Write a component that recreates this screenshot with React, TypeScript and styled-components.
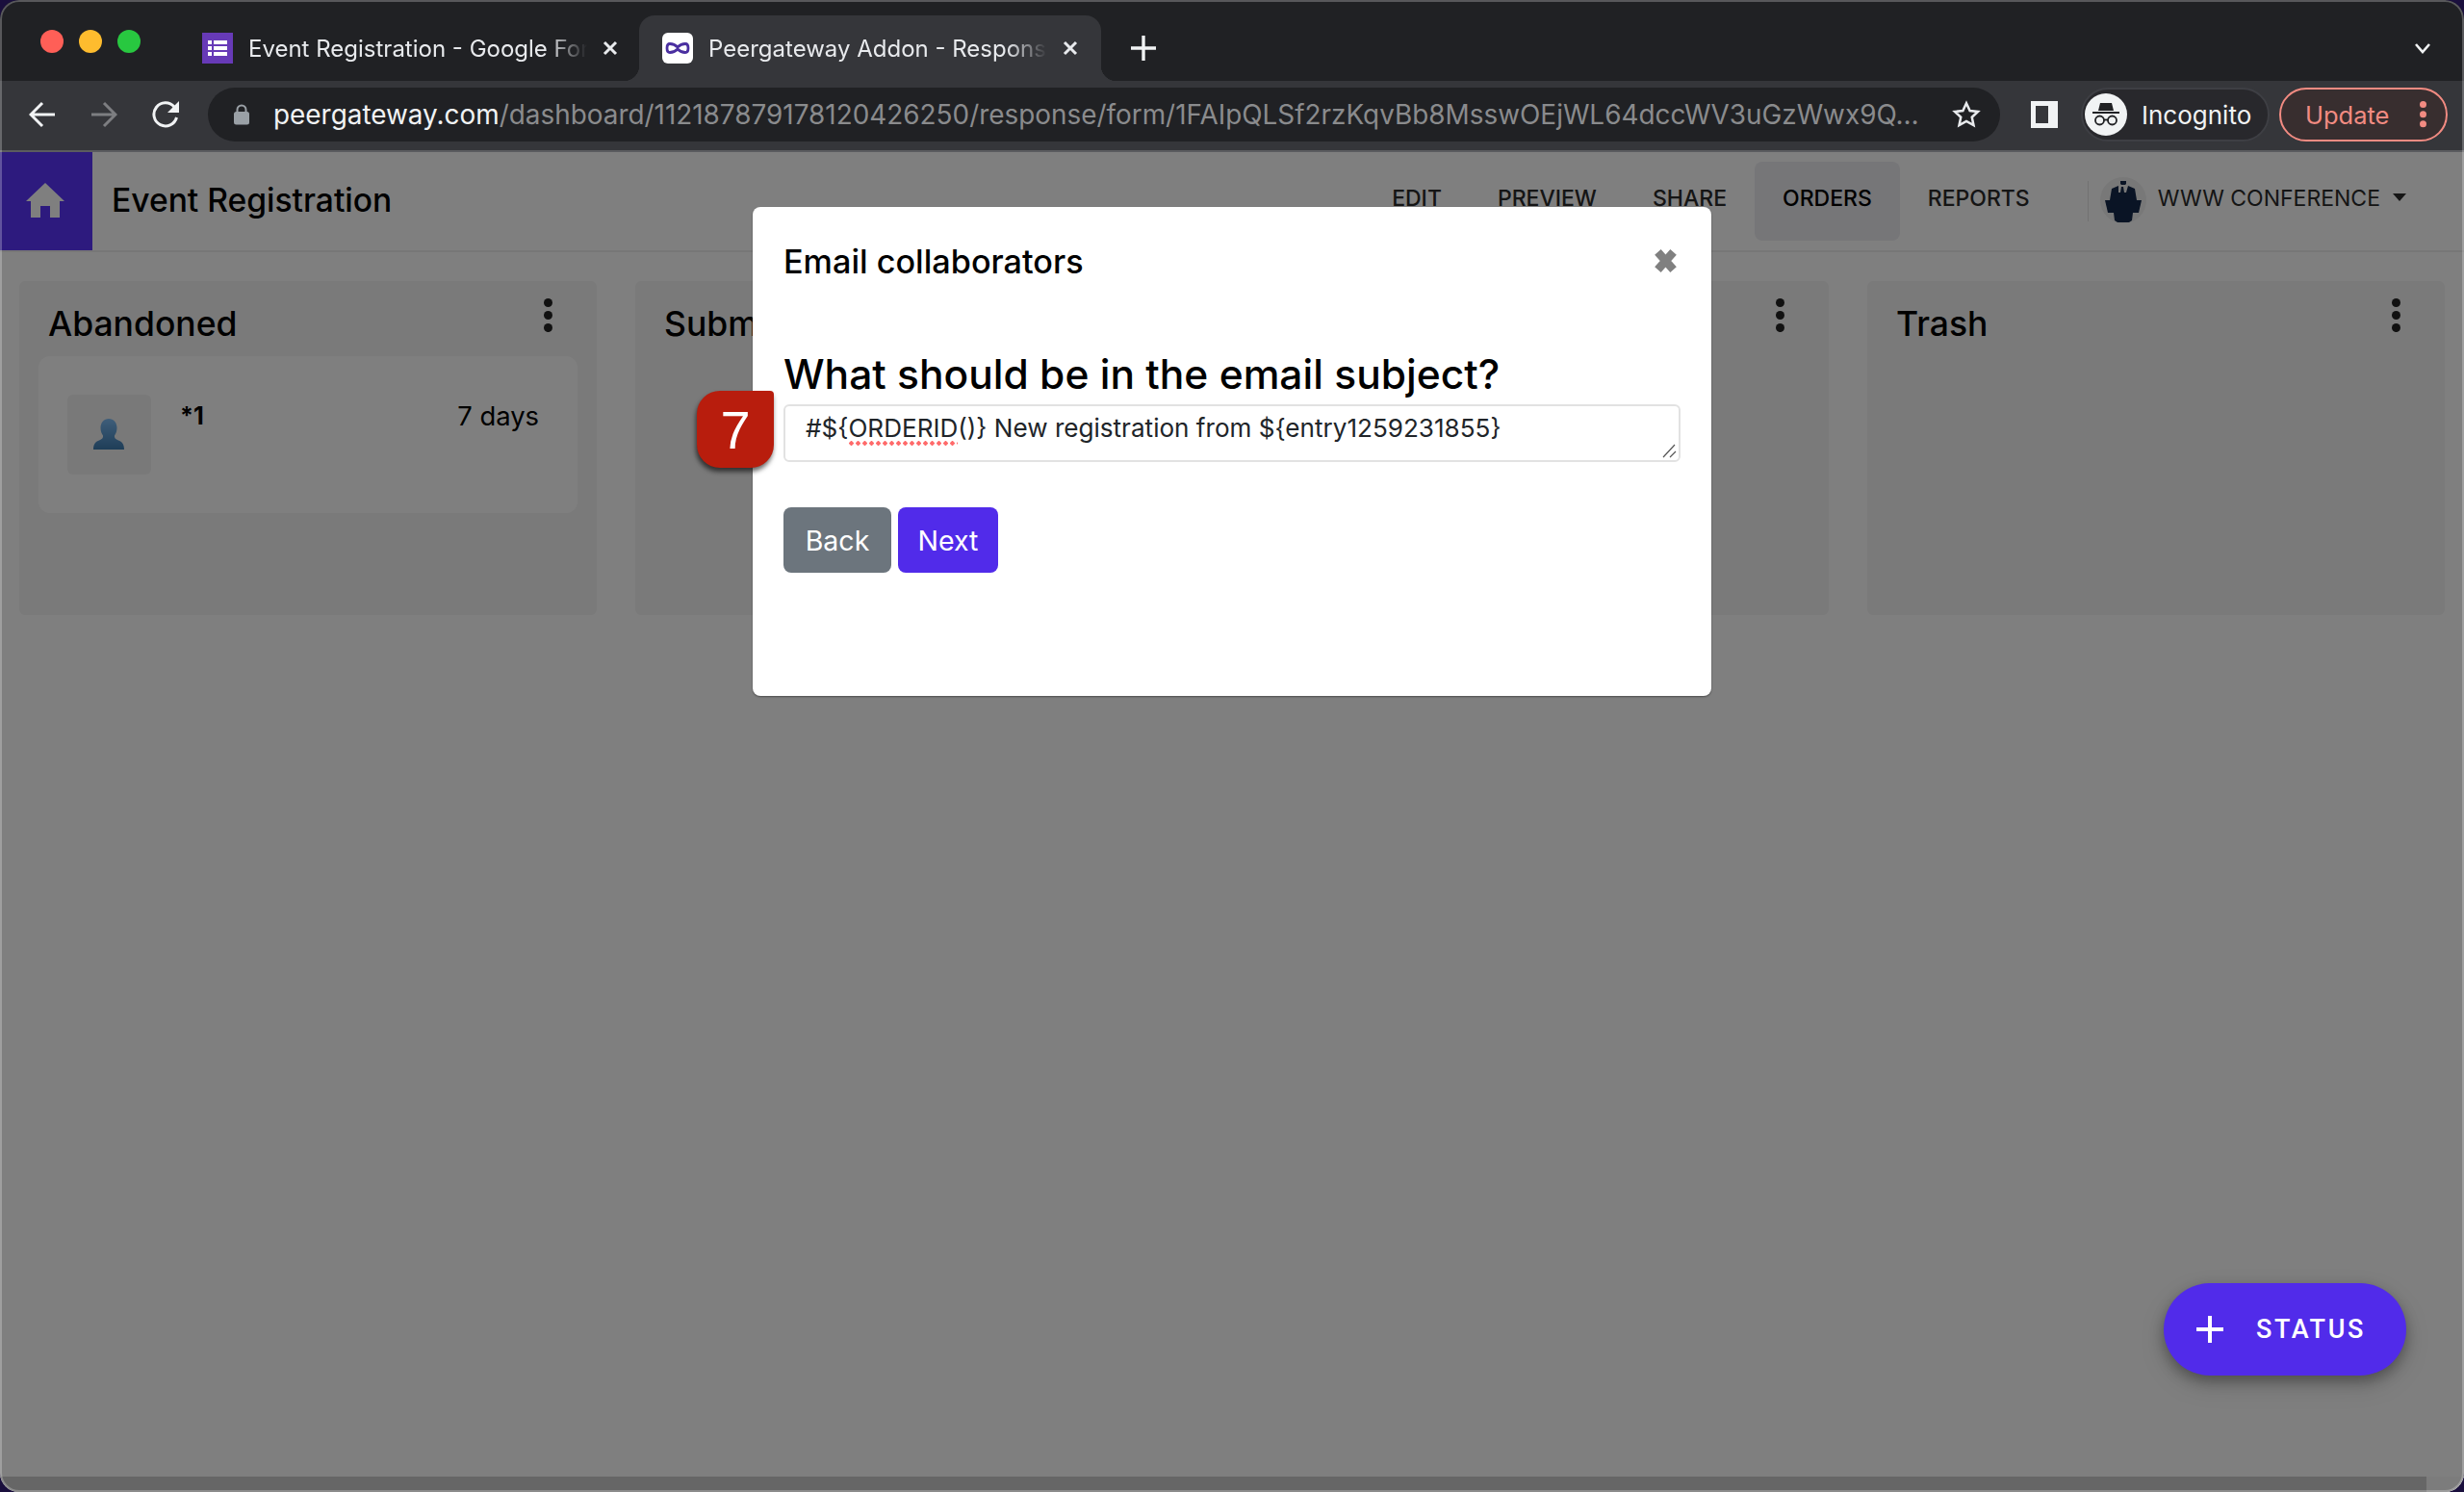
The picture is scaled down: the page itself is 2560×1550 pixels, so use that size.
import React from 'react'
import styled, { createGlobalStyle } from 'styled-components'

const GlobalStyle = createGlobalStyle`
  html, body {
    margin: 0;
    padding: 0;
    background: #1a0f3d;
    overflow: hidden;
  }
  * {
    box-sizing: border-box;
  }
`

const Window = styled.div`
  position: relative;
  width: 2560px;
  height: 1550px;
  display: flex;
  flex-direction: column;
  border-radius: 20px;
  overflow: hidden;
  font-family: Inter, "Liberation Sans", sans-serif;

  &::after {
    content: '';
    position: absolute;
    inset: 0;
    border-radius: 20px;
    border: 2px solid rgba(255, 255, 255, 0.25);
    pointer-events: none;
  }
`

const TabStrip = styled.div`
  height: 84px;
  flex: none;
  display: flex;
  align-items: stretch;
  padding-top: 16px;
  background: #202124;
`

const Lights = styled.div`
  display: flex;
  gap: 16px;
  align-self: flex-start;
  margin: 15px 40px 0 42px;
`

const Light = styled.span<{ $color: string }>`
  width: 24px;
  height: 24px;
  border-radius: 50%;
  background: ${(p) => p.$color};
`

const Tab = styled.div<{ $active?: boolean }>`
  position: relative;
  width: ${(p) => (p.$active ? '480px' : '478px')};
  display: flex;
  align-items: center;
  gap: 16px;
  padding: 0 ${(p) => (p.$active ? '24px' : '22px')} 0 24px;
  border-radius: 16px 16px 0 0;
  background: ${(p) => (p.$active ? '#35363a' : 'transparent')};

  ${(p) =>
    p.$active &&
    `
    &::before, &::after {
      content: '';
      position: absolute;
      bottom: 0;
      width: 16px;
      height: 16px;
    }
    &::before {
      left: -16px;
      background: radial-gradient(circle at 0 0, transparent 16px, #35363a 16.5px);
    }
    &::after {
      right: -16px;
      background: radial-gradient(circle at 100% 0, transparent 16px, #35363a 16.5px);
    }
  `}
`

const TabTitle = styled.span`
  flex: 1;
  min-width: 0;
  overflow: hidden;
  white-space: nowrap;
  font-size: 24px;
  color: #e8eaed;
  -webkit-mask-image: linear-gradient(to right, #000 88%, transparent 100%);
  mask-image: linear-gradient(to right, #000 88%, transparent 100%);
`

const NewTab = styled.div`
  width: 28px;
  display: flex;
  align-items: center;
  margin-left: 30px;
`

const TabListToggle = styled.div`
  margin-left: auto;
  padding-right: 34px;
  display: flex;
  align-items: center;
`

const Toolbar = styled.div`
  height: 74px;
  flex: none;
  display: flex;
  align-items: center;
  padding: 0 17px 2px 12px;
  background: #35363a;
  border-bottom: 2px solid #5b5c5f;
`

const NavButton = styled.div`
  width: 64px;
  display: flex;
  justify-content: center;
`

const Omnibox = styled.div`
  flex: 1;
  height: 56px;
  margin-left: 12px;
  display: flex;
  align-items: center;
  padding: 0 20px 0 26px;
  border-radius: 28px;
  background: #202124;
`

const UrlText = styled.div`
  flex: 1;
  margin-left: 24px;
  white-space: nowrap;
  overflow: hidden;
  font-size: 27.9px;
  color: #8a8b8d;

  b {
    font-weight: 400;
    color: #f1f3f4;
  }
`

const SidePanel = styled.div`
  width: 28px;
  height: 28px;
  margin-left: 32px;
  border: 5px solid #f1f3f4;
  border-right-width: 10px;
  background: #35363a;
`

const IncognitoPill = styled.div`
  width: 196px;
  height: 56px;
  margin-left: 24px;
  display: flex;
  align-items: center;
  gap: 15px;
  padding-left: 2px;
  border: 2px solid #3e3f44;
  border-radius: 28px;
  background: #28282c;
  font-size: 26px;
  color: #f1f3f4;
`

const IncognitoAvatar = styled.div`
  width: 44px;
  height: 44px;
  flex: none;
  display: flex;
  align-items: center;
  justify-content: center;
  border-radius: 50%;
  background: #f1f3f4;
`

const UpdatePill = styled.div`
  width: 175px;
  height: 56px;
  margin-left: 10px;
  display: flex;
  align-items: center;
  justify-content: space-between;
  padding: 0 20px 0 25px;
  border: 2px solid #f28b82;
  border-radius: 28px;
  background: #382e2f;
  font-size: 25.5px;
  color: #f28b82;
`

const Page = styled.div`
  position: relative;
  flex: 1;
  min-height: 0;
  display: flex;
  flex-direction: column;
  background: #fff;
`

const NavBar = styled.div`
  height: 104px;
  flex: none;
  display: flex;
  align-items: stretch;
  border-bottom: 2px solid #eee;
`

const HomeBlock = styled.div`
  width: 96px;
  display: flex;
  align-items: center;
  justify-content: center;
  padding: 0 3px 2px 0;
  background: #5a34fc;
`

const FormTitle = styled.div`
  align-self: center;
  margin: 0 0 3px 20px;
  font-size: 33.6px;
  font-weight: 500;
  color: #000;
`

const NavLinks = styled.div`
  margin-left: auto;
  display: flex;
  align-items: flex-start;
  padding-top: 10px;
`

const NavLink = styled.div<{ $active?: boolean }>`
  height: 82px;
  display: flex;
  align-items: center;
  padding: 0 29px 7px;
  border-radius: 8px;
  font-size: 23px;
  font-weight: 500;
  color: ${(p) => (p.$active ? '#000' : '#2a2a2a')};
  background: ${(p) => (p.$active ? '#ececf0' : 'transparent')};
`

const Account = styled.div`
  height: 42px;
  margin: 30px 60px 0 31px;
  padding-left: 12px;
  display: flex;
  align-items: center;
  gap: 12px;
  border-left: 1px solid #e4e4e4;
  font-size: 23px;
  color: #2a2a2a;
`

const AccountName = styled.span`
  margin-bottom: 6px;
`

const Caret = styled.span`
  width: 0;
  height: 0;
  margin: 0 0 8px 1px;
  border-left: 7px solid transparent;
  border-right: 7px solid transparent;
  border-top: 8px solid #2a2a2a;
`

const Board = styled.div`
  flex: 1;
  display: grid;
  grid-template-columns: repeat(4, 1fr);
  grid-auto-rows: 347px;
  gap: 40px;
  padding: 30px 20px 0 20px;
`

const Column = styled.div`
  border-radius: 6px;
  background: #f4f4f4;
`

const ColumnHeader = styled.div`
  height: 78px;
  display: flex;
  align-items: flex-start;
  justify-content: space-between;
  padding: 18px 46px 0 30px;
`

const ColumnTitle = styled.div`
  margin-top: 4px;
  font-size: 35.5px;
  line-height: 46px;
  font-weight: 500;
  color: #000;
`

const Card = styled.div`
  height: 163px;
  margin: 0 20px;
  display: flex;
  align-items: flex-start;
  gap: 30px;
  padding: 40px 40px 0 30px;
  border-radius: 12px;
  background: #fff;
`

const CardAvatar = styled.div`
  width: 87px;
  height: 83px;
  display: flex;
  align-items: flex-end;
  justify-content: center;
  padding: 0 2px 26px 0;
  border-radius: 6px;
  background: #f2f2f2;
`

const CardName = styled.div`
  font-size: 25px;
  line-height: 44px;
  font-weight: 700;
  color: #000;
`

const CardAge = styled.div`
  margin-left: auto;
  font-size: 27.4px;
  line-height: 44px;
  color: #000;
`

const ScrollTrack = styled.div`
  height: 16px;
  flex: none;
  display: flex;
  justify-content: flex-end;
  background: #ccc;
`

const ScrollCorner = styled.div`
  width: 39px;
  background: #f8f8f8;
`

const Backdrop = styled.div`
  position: absolute;
  inset: 0;
  background: rgba(0, 0, 0, 0.5);
`

const Modal = styled.div`
  position: absolute;
  left: 782px;
  top: 57px;
  width: 996px;
  height: 508px;
  display: flex;
  flex-direction: column;
  padding: 32px;
  border-radius: 8px;
  background: #fff;
  box-shadow: 0 1px 2px rgba(0, 0, 0, 0.4);
`

const ModalHeader = styled.div`
  height: 48px;
  flex: none;
  display: flex;
  align-items: center;
  justify-content: space-between;
`

const ModalTitle = styled.div`
  font-size: 34.2px;
  font-weight: 500;
  color: #000;
`

const CloseButton = styled.div`
  display: flex;
  margin-right: 2px;
`

const Question = styled.div`
  margin-top: 66px;
  font-size: 42.5px;
  line-height: 56px;
  font-weight: 500;
  color: #000;
`

const AnswerWrap = styled.div`
  position: relative;
  margin-top: 3px;
`

const AnswerBox = styled.div`
  position: relative;
  height: 60px;
  padding: 6px 0 0 21px;
  border: 2px solid #e2e2e2;
  border-radius: 6px;
  font-size: 26.1px;
  line-height: 34px;
  white-space: nowrap;
  color: #212529;
`

const Misspelled = styled.span`
  padding-bottom: 3px;
  background-image: radial-gradient(circle, #ff6b6b 2px, transparent 2.4px);
  background-size: 7px 5px;
  background-repeat: repeat-x;
  background-position: 0 100%;
`

const ResizeGrip = styled.svg`
  position: absolute;
  right: 2px;
  bottom: 2px;
`

const StepBadge = styled.div`
  position: absolute;
  left: -90px;
  top: -14px;
  width: 80px;
  height: 80px;
  display: flex;
  align-items: center;
  justify-content: center;
  border-radius: 24px 4px 24px 24px;
  background: #b81d0d;
  box-shadow: -1px 4px 5px rgba(0, 0, 0, 0.6);
  font-family: "Liberation Sans", Arial, sans-serif;
  font-size: 56px;
  color: #fff;
`

const Actions = styled.div`
  margin-top: 47px;
  display: flex;
  gap: 7px;
`

const ActionButton = styled.div<{ $primary?: boolean }>`
  width: ${(p) => (p.$primary ? '104px' : '112px')};
  height: 68px;
  display: flex;
  align-items: center;
  justify-content: center;
  border-radius: 8px;
  font-size: 28.5px;
  color: #fff;
  background: ${(p) => (p.$primary ? '#512bea' : '#6c757d')};
`

const Fab = styled.div`
  position: absolute;
  right: 60px;
  top: 1175px;
  width: 252px;
  height: 96px;
  display: flex;
  align-items: center;
  gap: 34px;
  padding-left: 34px;
  border-radius: 48px;
  background: #512bea;
  box-shadow: 0 6px 14px rgba(0, 0, 0, 0.3), 0 10px 28px rgba(0, 0, 0, 0.12);
  font-family: Roboto, sans-serif;
  font-size: 27px;
  font-weight: 500;
  letter-spacing: 2.6px;
  color: #fff;
`

const CloseX = ({ color = '#e8eaed' }: { color?: string }) => (
  <svg width="16" height="16" viewBox="0 0 16 16" style={{ flex: 'none' }}>
    <path d="M2 2l12 12M14 2L2 14" stroke={color} strokeWidth="3" />
  </svg>
)

const FormsIcon = () => (
  <svg width="32" height="32" viewBox="0 0 32 32" style={{ flex: 'none' }}>
    <rect width="32" height="32" fill="#673ab7" />
    <path d="M6 8h4v4H6zM12 8h14v4H12zM6 14h4v4H6zM12 14h14v4H12zM6 20h4v4H6zM12 20h14v4H12z" fill="#fff" />
  </svg>
)

const PeerIcon = () => (
  <svg width="32" height="32" viewBox="0 0 32 32" style={{ flex: 'none' }}>
    <rect width="32" height="32" rx="6" fill="#fff" />
    <path
      d="M16 15c-2-2-5-3.500-8-3.500-2 0-3 2-3 4.500s1 4.500 3 4.500c3 0 6-1.500 8-3.500 2 2 5 3.500 8 3.500 2 0 3-2 3-4.500s-1-4.500-3-4.500c-3 0-6 1.500-8 3.500z"
      fill="none"
      stroke="#4a2fa0"
      strokeWidth="2.8"
    />
  </svg>
)

const IncognitoIcon = () => (
  <svg width="30" height="30" viewBox="0 0 30 30">
    <path d="M9 3h12l2 8H7z" fill="#202124" />
    <rect x="1" y="12" width="28" height="2" fill="#202124" />
    <circle cx="8.5" cy="21" r="4.5" fill="none" stroke="#202124" strokeWidth="1.8" />
    <circle cx="21.5" cy="21" r="4.5" fill="none" stroke="#202124" strokeWidth="1.8" />
    <path d="M13 20.5h4" stroke="#202124" strokeWidth="1.8" />
  </svg>
)

const SpeakerIcon = () => (
  <svg width="48" height="48" viewBox="0 0 48 48" style={{ flex: 'none', marginTop: -2 }}>
    <circle cx="24" cy="24" r="24" fill="#f0f0f0" />
    <path d="M21 4h6v3l-1 1h-4l-1-1z" fill="#14284a" />
    <path d="M19 9l-7 3-2 12h28l-2-12-7-3-2 7h-2l-1-6h-2l-1 6h-2z" fill="#14284a" />
    <path d="M5 24h38l-3 13H8z" fill="#14284a" />
    <path d="M14 37h20l-1 8-3 2H18l-3-2z" fill="#14284a" />
  </svg>
)

const VerticalDots = ({ color, size = 9 }: { color: string; size?: number }) => (
  <svg width={size} height={size * 3.9} viewBox="0 0 9 35" style={{ flex: 'none' }}>
    <circle cx="4.5" cy="4.5" r="4.5" fill={color} />
    <circle cx="4.5" cy="17.5" r="4.5" fill={color} />
    <circle cx="4.5" cy="30.5" r="4.5" fill={color} />
  </svg>
)

const columns = ['Abandoned', 'Submitted', 'Paid', 'Trash']

const App = () => {
  return (
    <Window>
      <GlobalStyle />
      <TabStrip>
        <Lights>
          <Light $color="#ff5f57" />
          <Light $color="#febc2e" />
          <Light $color="#28c840" />
        </Lights>
        <Tab>
          <FormsIcon />
          <TabTitle>Event Registration - Google Forms</TabTitle>
          <CloseX />
        </Tab>
        <Tab $active>
          <PeerIcon />
          <TabTitle>Peergateway Addon - Responses</TabTitle>
          <CloseX />
        </Tab>
        <NewTab>
          <svg width="28" height="28" viewBox="0 0 28 28">
            <path d="M14 1v26M1 14h26" stroke="#f1f3f4" strokeWidth="3.4" />
          </svg>
        </NewTab>
        <TabListToggle>
          <svg width="18" height="12" viewBox="0 0 18 12">
            <path d="M2 2l7 8 7-8" fill="none" stroke="#f1f3f4" strokeWidth="2.6" />
          </svg>
        </TabListToggle>
      </TabStrip>

      <Toolbar>
        <NavButton>
          <svg width="28" height="28" viewBox="0 0 28 28">
            <path d="M27 14H3M14 2L2 14l12 12" fill="none" stroke="#f1f3f4" strokeWidth="3" />
          </svg>
        </NavButton>
        <NavButton>
          <svg width="28" height="28" viewBox="0 0 28 28">
            <path d="M1 14h24M14 2l12 12-12 12" fill="none" stroke="#7d7e81" strokeWidth="3" />
          </svg>
        </NavButton>
        <NavButton>
          <svg width="30" height="30" viewBox="0 0 30 30" style={{ marginLeft: 2 }}>
            <path d="M25.5 18a12 12 0 1 1-2.5-11" fill="none" stroke="#f1f3f4" strokeWidth="3" />
            <path d="M28 1v12H16z" fill="#f1f3f4" />
          </svg>
        </NavButton>
        <Omnibox>
          <svg width="18" height="22" viewBox="0 0 18 22" style={{ flex: 'none' }}>
            <path d="M4.5 9V6a4.5 4.5 0 0 1 9 0v3" fill="none" stroke="#9aa0a6" strokeWidth="2" />
            <rect x="1" y="8" width="16" height="13.5" rx="2.5" fill="#9aa0a6" />
          </svg>
          <UrlText>
            <b>peergateway.com</b>/dashboard/112187879178120426250/response/form/1FAIpQLSf2rzKqvBb8MsswOEjWL64dccWV3uGzWwx9Q…
          </UrlText>
          <svg width="30" height="30" viewBox="0 0 24 24" style={{ flex: 'none' }}>
            <path
              d="M12 2.6l2.9 6.2 6.7.8-5 4.6 1.4 6.7-6-3.4-6 3.4 1.4-6.7-5-4.6 6.7-.8z"
              fill="none"
              stroke="#e8eaed"
              strokeWidth="2"
            />
          </svg>
        </Omnibox>
        <SidePanel />
        <IncognitoPill>
          <IncognitoAvatar>
            <IncognitoIcon />
          </IncognitoAvatar>
          Incognito
        </IncognitoPill>
        <UpdatePill>
          Update
          <VerticalDots color="#f28b82" size={7} />
        </UpdatePill>
      </Toolbar>

      <Page>
        <NavBar>
          <HomeBlock>
            <svg width="40" height="36" viewBox="0 0 40 36">
              <path d="M20 0L40 19h-5v17H25V24h-10v12H5V19H0z" fill="#fff" />
            </svg>
          </HomeBlock>
          <FormTitle>Event Registration</FormTitle>
          <NavLinks>
            <NavLink>EDIT</NavLink>
            <NavLink>PREVIEW</NavLink>
            <NavLink>SHARE</NavLink>
            <NavLink $active>ORDERS</NavLink>
            <NavLink>REPORTS</NavLink>
          </NavLinks>
          <Account>
            <SpeakerIcon />
            <AccountName>WWW CONFERENCE</AccountName>
            <Caret />
          </Account>
        </NavBar>

        <Board>
          {columns.map((title) => (
            <Column key={title}>
              <ColumnHeader>
                <ColumnTitle>{title}</ColumnTitle>
                <VerticalDots color="#222" />
              </ColumnHeader>
              {title === 'Abandoned' && (
                <Card>
                  <CardAvatar>
                    <svg width="32" height="32" viewBox="0 0 32 32">
                      <defs>
                        <linearGradient id="person" x1="0" y1="0" x2="0" y2="1">
                          <stop offset="0" stopColor="#7ebcf4" />
                          <stop offset="1" stopColor="#3e7cb0" />
                        </linearGradient>
                      </defs>
                      <path
                        d="M16 0c5 0 8.500 4 8.500 9.500 0 3-1 6-2.500 8-.5 2 1 4 4 5 3 1 6 3 6 9.500H0c0-6.500 3-8.500 6-9.500 3-1 4.500-3 4-5-1.500-2-2.500-5-2.500-8C7.500 4 11 0 16 0z"
                        fill="url(#person)"
                      />
                    </svg>
                  </CardAvatar>
                  <CardName>*1</CardName>
                  <CardAge>7 days</CardAge>
                </Card>
              )}
            </Column>
          ))}
        </Board>

        <ScrollTrack>
          <ScrollCorner />
        </ScrollTrack>

        <Backdrop />

        <Modal>
          <ModalHeader>
            <ModalTitle>Email collaborators</ModalTitle>
            <CloseButton>
              <svg width="27" height="26" viewBox="0 0 25 24">
                <path d="M5 3.500l15 17M20 3.500l-15 17" stroke="#808080" strokeWidth="8" />
              </svg>
            </CloseButton>
          </ModalHeader>
          <Question>What should be in the email subject?</Question>
          <AnswerWrap>
            <StepBadge>7</StepBadge>
            <AnswerBox>
              #$&#123;<Misspelled>ORDERID</Misspelled>()&#125; New registration from $&#123;entry1259231855&#125;
              <ResizeGrip width="16" height="16" viewBox="0 0 16 16">
                <path d="M14 2L2 15M15 9l-6 6" stroke="#555" strokeWidth="1.2" fill="none" />
              </ResizeGrip>
            </AnswerBox>
          </AnswerWrap>
          <Actions>
            <ActionButton>Back</ActionButton>
            <ActionButton $primary>Next</ActionButton>
          </Actions>
        </Modal>

        <Fab>
          <svg width="28" height="28" viewBox="0 0 28 28" style={{ flex: 'none' }}>
            <path d="M14 0v28M0 14h28" stroke="#fff" strokeWidth="4" />
          </svg>
          STATUS
        </Fab>
      </Page>
    </Window>
  )
}

export default App
